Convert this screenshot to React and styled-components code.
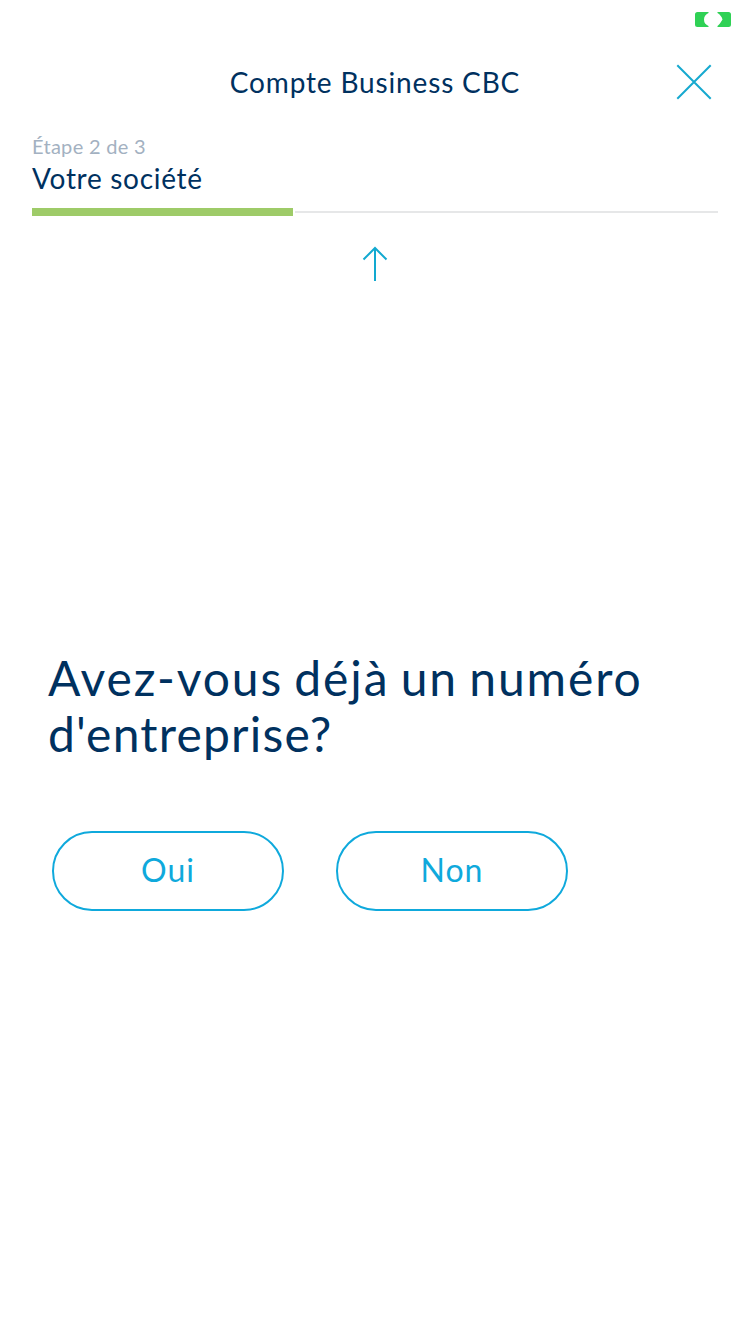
import React from 'react';
import styled, { createGlobalStyle } from 'styled-components';

const GlobalStyle = createGlobalStyle`
  * { box-sizing: border-box; }
  body { margin: 0; background: #fff; }
`;

const Screen = styled.div`
  display: flex;
  flex-direction: column;
  width: 750px;
  height: 1334px;
  overflow: hidden;
  background: #fff;
  color: #00315f;
  font-family: Lato, "Noto Sans", sans-serif;
`;

const StatusBar = styled.div`
  display: flex;
  justify-content: flex-end;
  height: 40px;
  padding: 12px 19px 0 0;
`;

const Header = styled.header`
  display: grid;
  grid-template-columns: 1fr auto 1fr;
  align-items: center;
  height: 84px;
  padding: 0 38px 0 38px;
`;

const Title = styled.h1`
  grid-column: 2;
  margin: 0;
  font-size: 28px;
  line-height: 36px;
  font-weight: 400;
  letter-spacing: 0.84px;
  white-space: nowrap;
`;

const CloseButton = styled.button`
  display: flex;
  justify-self: end;
  padding: 0;
  border: 0;
  background: none;
`;

const Step = styled.section`
  padding: 10px 32px 0;
`;

const StepCount = styled.div`
  font-size: 20px;
  line-height: 24px;
  letter-spacing: 0.3px;
  color: #a3b1c1;
`;

const StepName = styled.div`
  font-size: 28px;
  line-height: 36px;
  letter-spacing: 0.7px;
  margin-top: 2px;
`;

const Track = styled.div`
  display: flex;
  align-items: center;
  height: 8px;
  margin-top: 12px;
`;

const Done = styled.div`
  width: 261px;
  height: 8px;
  background: #9ecb68;
`;

const Remaining = styled.div`
  flex: 1;
  height: 2px;
  margin-left: 2px;
  background: #e6e7e8;
`;

const BackUp = styled.div`
  display: flex;
  justify-content: center;
  height: 66px;
  padding-top: 30px;
`;

const Question = styled.main`
  flex: 1;
  padding: 368px 48px 0;
`;

const Prompt = styled.h2`
  margin: 0;
  font-size: 48px;
  line-height: 56px;
  font-weight: 400;
  word-spacing: -3px;
`;

const PromptLine = styled.span`
  display: block;
  letter-spacing: ${(p) => p.$tracking};
`;

const Answers = styled.div`
  display: flex;
  gap: 52px;
  padding: 69px 0 0 4px;
`;

const Answer = styled.button`
  width: 232px;
  height: 80px;
  padding: 0 0 2px;
  border: 2px solid #0fa9dc;
  border-radius: 40px;
  background: #fff;
  color: #0fa9dc;
  font: 400 32px/40px Lato, "Noto Sans", sans-serif;
  letter-spacing: 1px;
`;

const Battery = () => (
  <svg width="36" height="15" viewBox="0 0 36 15" fill="#2fd155">
    <path d="M2.5 0H13.5V1Q9 3 9 7.5Q9 12 13.5 14V15H2.5Q0 15 0 12.5V2.5Q0 0 2.5 0Z" />
    <path d="M22.5 0H33.5Q36 0 36 2.5V12.5Q36 15 33.5 15H22.5V14Q24.5 12.5 27.5 7.5Q26.5 3.5 22.5 1Z" />
  </svg>
);

const Close = () => (
  <svg width="36" height="36" viewBox="0 0 36 36" fill="none" stroke="#16a9cf" strokeWidth="2">
    <path d="M1.3 1.3L34.7 34.7M34.7 1.3L1.3 34.7" />
  </svg>
);

const ArrowUp = () => (
  <svg width="26" height="36" viewBox="0 0 26 36" fill="none" stroke="#12a9d0" strokeWidth="2">
    <path d="M13 35V2M1.5 13.5L13 2L24.5 13.5" />
  </svg>
);

export default function App() {
  return (
    <>
      <GlobalStyle />
      <Screen>
        <StatusBar>
          <Battery />
        </StatusBar>
        <Header>
          <Title>Compte Business CBC</Title>
          <CloseButton aria-label="Fermer">
            <Close />
          </CloseButton>
        </Header>
        <Step>
          <StepCount>Étape 2 de 3</StepCount>
          <StepName>Votre société</StepName>
          <Track>
            <Done />
            <Remaining />
          </Track>
        </Step>
        <BackUp>
          <ArrowUp />
        </BackUp>
        <Question>
          <Prompt>
            <PromptLine $tracking="1.9px">Avez-vous déjà un numéro</PromptLine>
            <PromptLine $tracking="1.2px">d'entreprise?</PromptLine>
          </Prompt>
          <Answers>
            <Answer>Oui</Answer>
            <Answer>Non</Answer>
          </Answers>
        </Question>
      </Screen>
    </>
  );
}
